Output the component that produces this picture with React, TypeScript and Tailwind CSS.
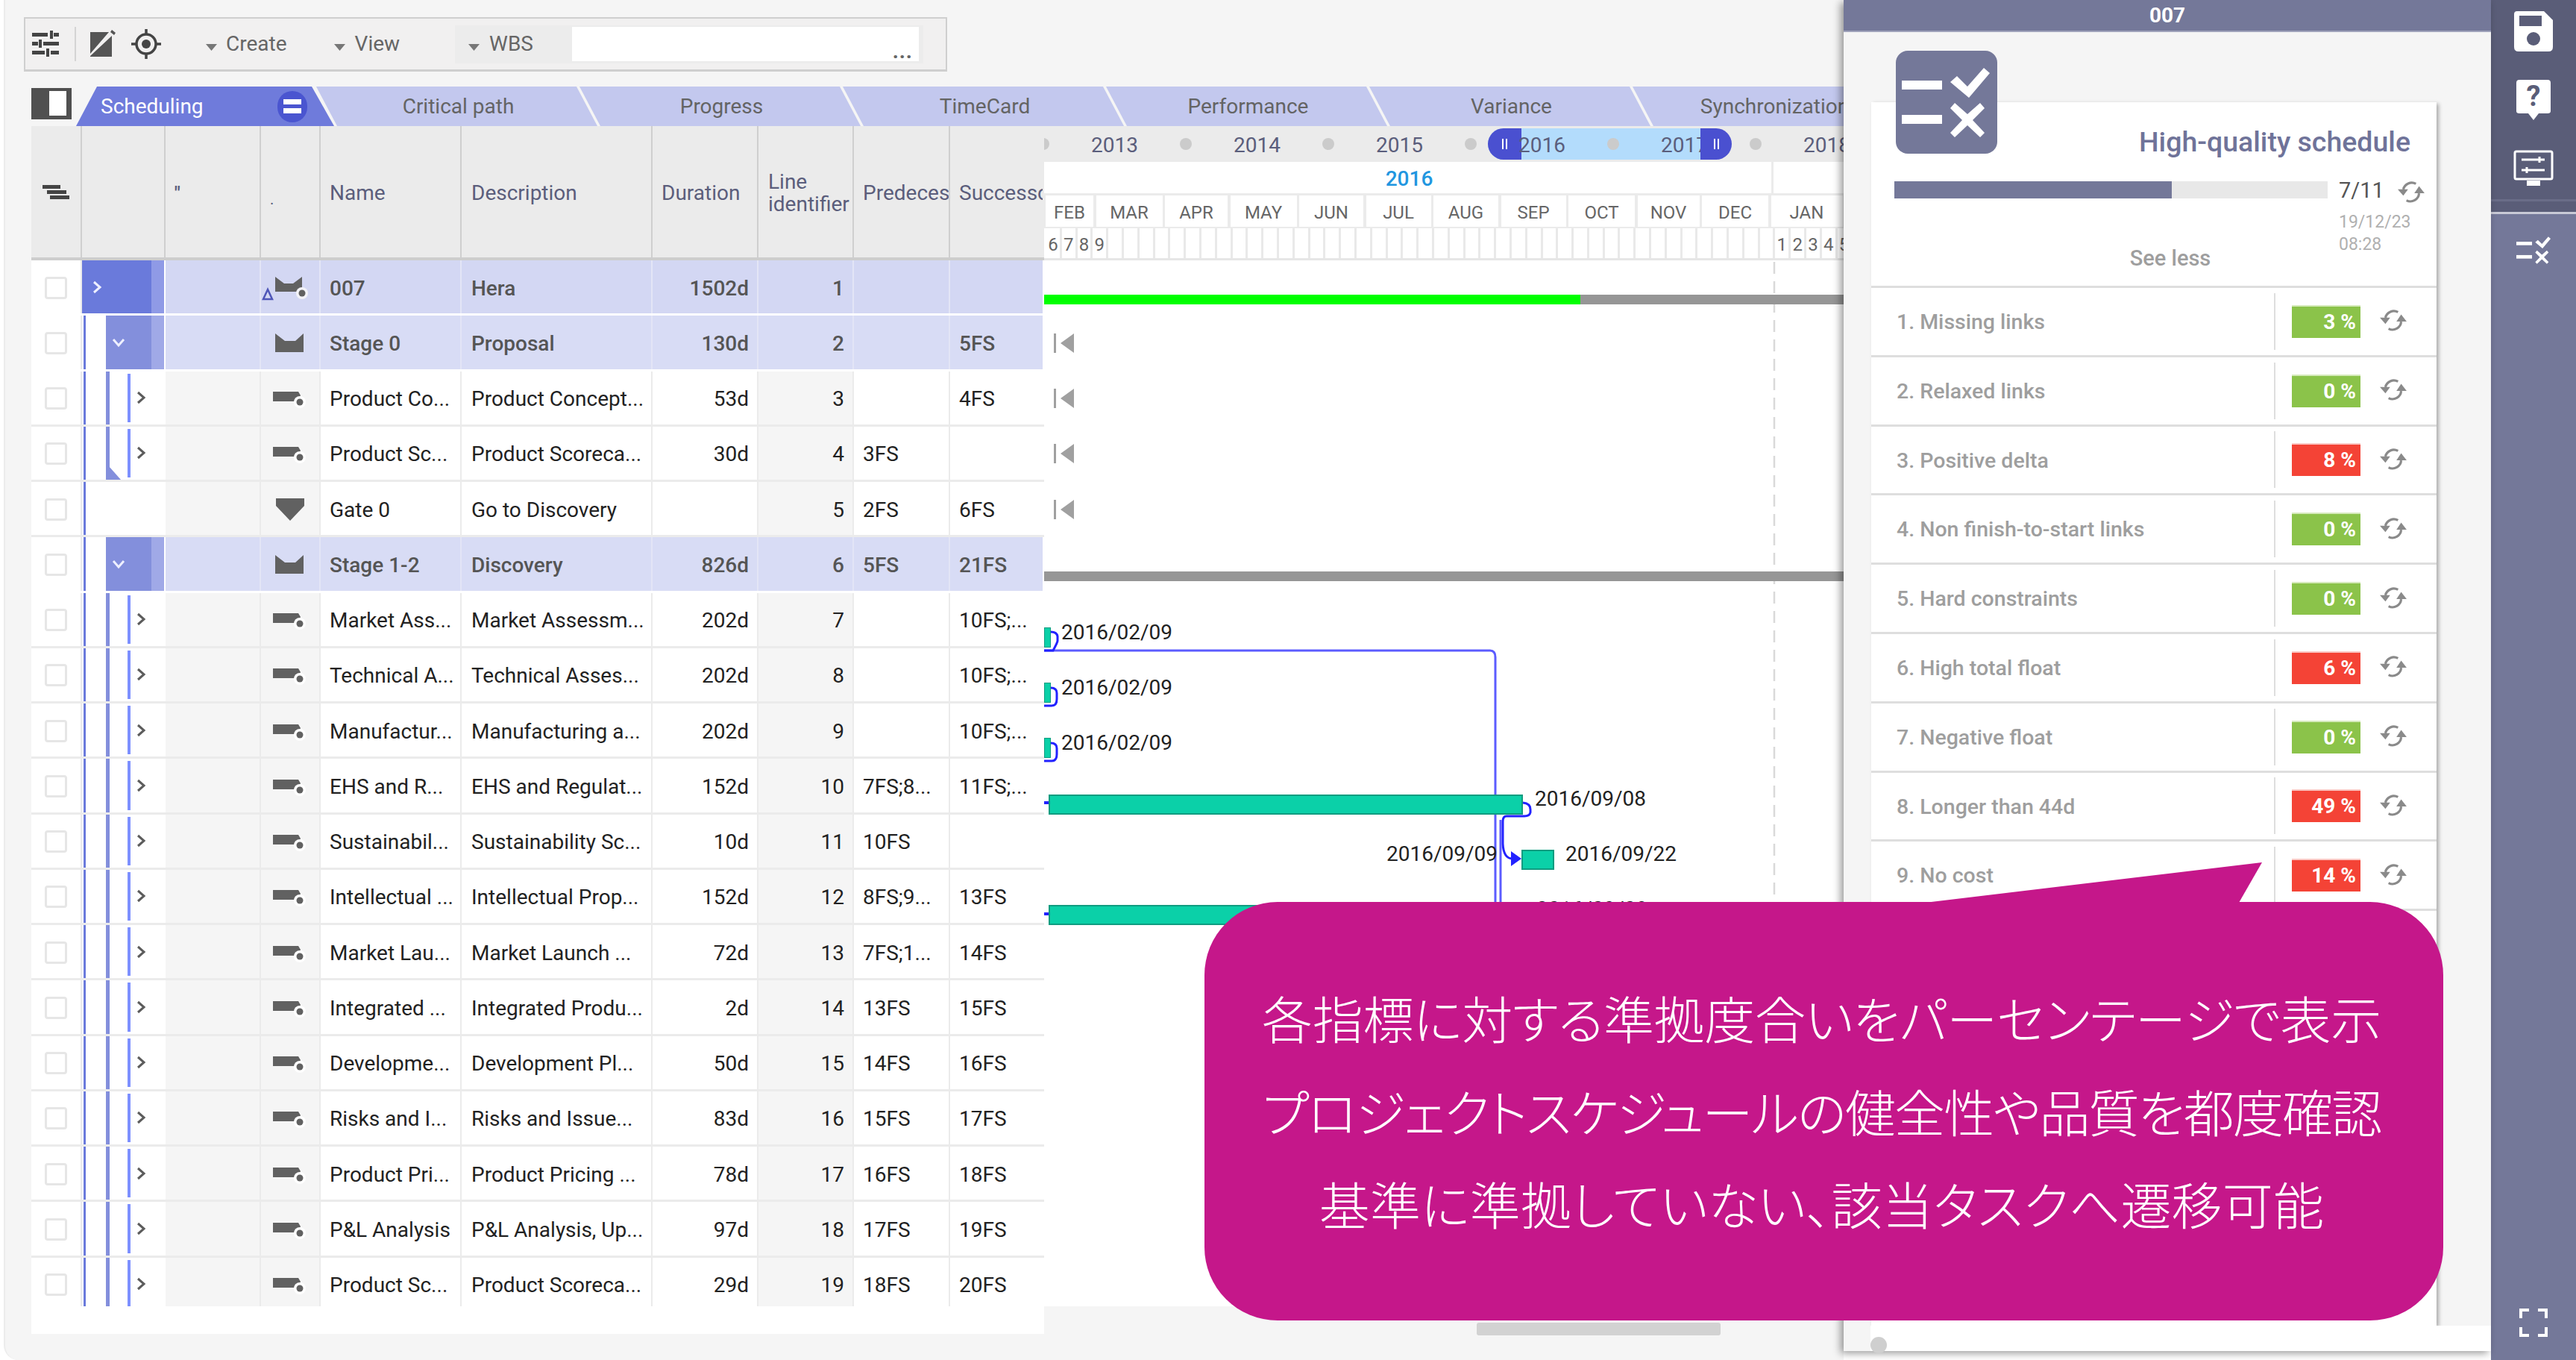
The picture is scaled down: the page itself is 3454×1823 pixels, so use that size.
import React from "react";

type Row = {
  name: string;
  desc: string;
  dur: string;
  id: string;
  pred: string;
  succ: string;
  kind: "root" | "stage" | "task" | "gate";
  end?: boolean;
};

const rows: Row[] = [
  { name: "007", desc: "Hera", dur: "1502d", id: "1", pred: "", succ: "", kind: "root" },
  { name: "Stage 0", desc: "Proposal", dur: "130d", id: "2", pred: "", succ: "5FS", kind: "stage" },
  { name: "Product Co...", desc: "Product Concept...", dur: "53d", id: "3", pred: "", succ: "4FS", kind: "task" },
  { name: "Product Sc...", desc: "Product Scoreca...", dur: "30d", id: "4", pred: "3FS", succ: "", kind: "task", end: true },
  { name: "Gate 0", desc: "Go to Discovery", dur: "", id: "5", pred: "2FS", succ: "6FS", kind: "gate" },
  { name: "Stage 1-2", desc: "Discovery", dur: "826d", id: "6", pred: "5FS", succ: "21FS", kind: "stage" },
  { name: "Market Ass...", desc: "Market Assessm...", dur: "202d", id: "7", pred: "", succ: "10FS;...", kind: "task" },
  { name: "Technical A...", desc: "Technical Asses...", dur: "202d", id: "8", pred: "", succ: "10FS;...", kind: "task" },
  { name: "Manufactur...", desc: "Manufacturing a...", dur: "202d", id: "9", pred: "", succ: "10FS;...", kind: "task" },
  { name: "EHS and R...", desc: "EHS and Regulat...", dur: "152d", id: "10", pred: "7FS;8...", succ: "11FS;...", kind: "task" },
  { name: "Sustainabil...", desc: "Sustainability Sc...", dur: "10d", id: "11", pred: "10FS", succ: "", kind: "task" },
  { name: "Intellectual ...", desc: "Intellectual Prop...", dur: "152d", id: "12", pred: "8FS;9...", succ: "13FS", kind: "task" },
  { name: "Market Lau...", desc: "Market Launch ...", dur: "72d", id: "13", pred: "7FS;1...", succ: "14FS", kind: "task" },
  { name: "Integrated ...", desc: "Integrated Produ...", dur: "2d", id: "14", pred: "13FS", succ: "15FS", kind: "task" },
  { name: "Developme...", desc: "Development Pl...", dur: "50d", id: "15", pred: "14FS", succ: "16FS", kind: "task" },
  { name: "Risks and I...", desc: "Risks and Issue...", dur: "83d", id: "16", pred: "15FS", succ: "17FS", kind: "task" },
  { name: "Product Pri...", desc: "Product Pricing ...", dur: "78d", id: "17", pred: "16FS", succ: "18FS", kind: "task" },
  { name: "P&L Analysis", desc: "P&L Analysis, Up...", dur: "97d", id: "18", pred: "17FS", succ: "19FS", kind: "task" },
  { name: "Product Sc...", desc: "Product Scoreca...", dur: "29d", id: "19", pred: "18FS", succ: "20FS", kind: "task" },
];

const checks: { label: string; v: number; bad?: boolean }[] = [
  { label: "1. Missing links", v: 3 },
  { label: "2. Relaxed links", v: 0 },
  { label: "3. Positive delta", v: 8, bad: true },
  { label: "4. Non finish-to-start links", v: 0 },
  { label: "5. Hard constraints", v: 0 },
  { label: "6. High total float", v: 6, bad: true },
  { label: "7. Negative float", v: 0 },
  { label: "8. Longer than 44d", v: 49, bad: true },
  { label: "9. No cost", v: 14, bad: true },
];

const months: [string, number][] = [
  ["FEB", 64], ["MAR", 89], ["APR", 84], ["MAY", 89], ["JUN", 86], ["JUL", 87], ["AUG", 87], ["SEP", 87], ["OCT", 89], ["NOV", 83], ["DEC", 89], ["JAN", 96],
];

const days: string[] = Array.from({ length: 53 }, (_, i) => {
  if (i < 4) return String(i + 6);
  if (i >= 47) return String(i - 46);
  return "";
});

function Refresh() {
  return (
    <svg viewBox="0 0 36 32" className="w-[38px] h-[34px]">
      <path d="M8 13 A11 11 0 0 1 24 6" fill="none" stroke="#8a8a8a" strokeWidth="3" />
      <path d="M1 13 H14 L8 21 Z" fill="#8a8a8a" />
      <path d="M28 18 A11 11 0 0 1 12 27" fill="none" stroke="#8a8a8a" strokeWidth="3" />
      <path d="M22 18 H35 L28 9 Z" fill="#8a8a8a" />
    </svg>
  );
}

function GlyphShapes() {
  return (
    <g fill="#fff">
      <rect x="8" y="40" width="54" height="12" />
      <rect x="8" y="86" width="54" height="12" />
      <path d="M73 42 L82 34 L96 48 L118 23 L126 30 L98 63 Z" />
      <path d="M79 70 L96 85 L113 70 L119 77 L103 93 L119 110 L113 116 L96 100 L79 116 L73 110 L89 93 L73 77 Z" />
    </g>
  );
}

function TypeIcon({ kind }: { kind: Row["kind"] }) {
  if (kind === "gate")
    return (
      <svg viewBox="0 0 40 32" className="w-[40px] h-[32px]">
        <path d="M1 1 H39 V11 L20 31 L1 11 Z" fill="#616161" />
      </svg>
    );
  if (kind === "task")
    return (
      <svg viewBox="0 0 48 26" className="w-[48px] h-[26px]">
        <path d="M1 4 H35 L38 9 L34 17 H1 Z" fill="#616161" />
        <circle cx="37" cy="18" r="8" fill="#fff" />
        <circle cx="37" cy="18" r="4.5" fill="#616161" />
      </svg>
    );
  if (kind === "stage")
    return (
      <svg viewBox="0 0 48 28" className="w-[48px] h-[28px]">
        <path d="M4 1 L17 11 H31 L42 1 V26 H4 Z" fill="#616161" />
      </svg>
    );
  return (
    <svg viewBox="0 0 62 34" className="w-[62px] h-[34px] -ml-[14px]">
      <path d="M18 2 L30 11 H42 L54 2 V22 H18 Z" fill="#616161" />
      <circle cx="54" cy="24" r="8" fill="#f3f3f8" />
      <circle cx="54" cy="24" r="4.5" fill="#616161" />
      <path d="M8 19 L14 32 H2 Z" fill="none" stroke="#4f56b8" strokeWidth="2.5" />
    </svg>
  );
}

function Chevron({ down, white }: { down?: boolean; white?: boolean }) {
  return (
    <svg viewBox="0 0 20 20" className="w-[20px] h-[20px]">
      <path
        d={down ? "M3 6 L10 14 L17 6" : "M6 3 L14 10 L6 17"}
        fill="none"
        stroke={white ? "#eef0ff" : "#5c5c5c"}
        strokeWidth="3"
      />
    </svg>
  );
}

function TreeCell({ row }: { row: Row }) {
  if (row.kind === "root")
    return (
      <div className="w-[112px] shrink-0 flex h-full">
        <div className="w-[93px] bg-[#6a7adb] flex items-center pl-[10px]">
          <Chevron white />
        </div>
        <div className="w-[17px] bg-[#8f9ae6]" />
      </div>
    );
  if (row.kind === "stage")
    return (
      <div className="w-[112px] shrink-0 flex h-full">
        <div className="w-[3px] bg-[#6a7adb] ml-[2px]" />
        <div className="w-[27px]" />
        <div className="w-[61px] bg-[#838fdc] flex items-center pl-[7px]">
          <Chevron down white />
        </div>
        <div className="w-[17px] bg-[#a0a9e7]" />
      </div>
    );
  if (row.kind === "gate")
    return (
      <div className="w-[112px] shrink-0 flex h-full">
        <div className="w-[3px] bg-[#6a7adb] ml-[2px]" />
      </div>
    );
  return (
    <div className="w-[112px] shrink-0 flex h-full items-stretch">
      <div className="w-[3px] bg-[#6a7adb] ml-[2px]" />
      <div className="w-[27px]" />
      <div className="relative w-[5px] bg-[#838fdc]">
        {row.end && (
          <svg viewBox="0 0 20 18" className="absolute left-0 bottom-0 w-[20px] h-[18px]">
            <path d="M0 18 L4 0 L20 18 Z" fill="#838fdc" />
          </svg>
        )}
      </div>
      <div className="w-[24px]" />
      <div className="w-[4px] bg-[#7d90ff] my-[3px]" />
      <div className="flex items-center ml-[4px]">
        <Chevron />
      </div>
    </div>
  );
}

function TableRow({ row }: { row: Row }) {
  const hi = row.kind === "root" || row.kind === "stage";
  const rootRow = row.kind === "root";
  const txt = hi ? "text-[#555] font-medium pt-[4px]" : "text-[#222] pt-[4px]";
  const hiBg = rootRow ? "bg-[#d3d7f3]" : "bg-[#d8dcf5]";
  const sep = hi ? "border-r-2 border-[#e3e5f6]" : "border-r-2 border-[#ebebeb]";
  const soft = hi ? hiBg : "bg-[#f5f5f5]";
  const plain = hi ? hiBg : "bg-white";
  return (
    <div className={`flex h-[74.25px] shrink-0 border-b-[3px] ${hi ? "border-white" : "border-[#ebebeb]"}`}>
      <div className="w-[68px] shrink-0 flex items-center justify-center border-r-2 border-[#ebebeb] bg-white pt-[2px]">
        <div className="w-[30px] h-[30px] rounded-[4px] border-[3px] border-[#e6e6e6]" />
      </div>
      <TreeCell row={row} />
      <div className={`w-[128px] shrink-0 ${soft} ${sep}`} />
      <div className={`w-[80px] shrink-0 ${soft} ${sep} flex items-center justify-center pt-[2px]`}>
        <TypeIcon kind={row.kind} />
      </div>
      <div className={`w-[189px] shrink-0 ${plain} ${sep} ${txt} flex items-center pl-[12px] whitespace-nowrap overflow-hidden`}>{row.name}</div>
      <div className={`w-[256px] shrink-0 ${plain} ${sep} ${txt} flex items-center pl-[13px] whitespace-nowrap overflow-hidden`}>{row.desc}</div>
      <div className={`w-[142px] shrink-0 ${plain} ${sep} ${txt} flex items-center justify-end pr-[11px]`}>{row.dur}</div>
      <div className={`w-[128px] shrink-0 ${soft} ${sep} ${txt} flex items-center justify-end pr-[11px]`}>{row.id}</div>
      <div className={`w-[129px] shrink-0 ${plain} ${sep} ${txt} flex items-center pl-[12px] whitespace-nowrap overflow-hidden`}>{row.pred}</div>
      <div className={`w-[124px] shrink-0 ${plain} ${txt} flex items-center pl-[12px] whitespace-nowrap overflow-hidden`}>{row.succ}</div>
    </div>
  );
}

function Header() {
  const cell = "shrink-0 border-r-2 border-[#cfcfcf] flex items-center pl-[12px] pt-[4px] whitespace-nowrap overflow-hidden";
  return (
    <div className="flex h-[180px] shrink-0 bg-[#ebebeb] border-b-4 border-[#cdcdcd] text-[#5b5e7c] text-[28px]">
      <div className="w-[68px] shrink-0 border-r-2 border-[#cfcfcf] flex items-center justify-center pt-[2px]">
        <svg viewBox="0 0 36 20" className="w-[36px] h-[20px]">
          <rect x="0" y="0" width="24" height="5" fill="#444" />
          <rect x="6" y="7" width="26" height="5" fill="#444" />
          <rect x="10" y="14" width="26" height="5" fill="#444" />
        </svg>
      </div>
      <div className="w-[112px] shrink-0 border-r-2 border-[#cfcfcf]" />
      <div className={`w-[128px] ${cell} text-[24px] font-bold`}>"</div>
      <div className={`w-[80px] ${cell} text-[20px] pt-[20px]`}>.</div>
      <div className={`w-[189px] ${cell}`}>Name</div>
      <div className={`w-[256px] ${cell} pl-[13px]`}>Description</div>
      <div className={`w-[142px] ${cell}`}>Duration</div>
      <div className={`w-[128px] ${cell} leading-[30px] pl-[13px]`}>
        <span>
          Line
          <br />
          identifier
        </span>
      </div>
      <div className={`w-[129px] ${cell}`}>Predeces</div>
      <div className="w-[124px] shrink-0 flex items-center pl-[12px] pt-[4px] whitespace-nowrap overflow-hidden">Successors</div>
    </div>
  );
}

function Tabs() {
  const names = ["Critical path", "Progress", "TimeCard", "Performance", "Variance", "Synchronization"];
  return (
    <div className="flex h-[53px] shrink-0 text-[28px] pl-[42px]">
      <div className="w-[54px] h-[42px] mt-[2px] shrink-0 border-solid border-l-[24px] border-t-[4px] border-b-[5px] border-r-[7px] border-[#505050] bg-white" />
      <div className="w-[346px] ml-[6px] shrink-0 h-full bg-[#6f7bdb] [clip-path:polygon(28px_0,316px_0,100%_100%,0_100%)] flex items-center justify-between pl-[33px] pr-[36px] text-white">
        <span>Scheduling</span>
        <span className="w-[40px] h-[42px] rounded-full bg-[#4a55d0] flex flex-col items-center justify-center gap-[5px]">
          <span className="w-[24px] h-[7px] bg-white" />
          <span className="w-[24px] h-[7px] bg-white" />
        </span>
      </div>
      {names.map((n) => (
        <div
          key={n}
          className="w-[377px] -ml-[24px] shrink-0 h-full bg-[#c3c8ee] [clip-path:polygon(0_0,349px_0,100%_100%,28px_100%)] flex items-center justify-center pl-[4px] text-[#646464] whitespace-nowrap"
        >
          {n}
        </div>
      ))}
    </div>
  );
}

function Caret() {
  return (
    <svg viewBox="0 0 15 9" className="w-[15px] h-[9px] mt-[8px] shrink-0">
      <path d="M0 0 H15 L7.5 9 Z" fill="#777" />
    </svg>
  );
}

function Toolbar() {
  return (
    <div className="ml-[32px] w-[1238px] h-[73px] shrink-0 bg-[#f1f0f0] border-2 border-[#cfcfcf] border-b-[3px] flex items-center text-[28px] text-[#666]">
      <svg viewBox="0 0 36 36" className="w-[36px] h-[36px] ml-[9px]">
        <g fill="#444">
          <rect x="0" y="3" width="21" height="5" />
          <rect x="24" y="0" width="4" height="11" />
          <rect x="29" y="3" width="7" height="5" />
          <rect x="0" y="15" width="8" height="5" />
          <rect x="9" y="12" width="4" height="11" />
          <rect x="15" y="15" width="21" height="5" />
          <rect x="0" y="27" width="17" height="5" />
          <rect x="19" y="24" width="4" height="11" />
          <rect x="25" y="27" width="11" height="5" />
        </g>
      </svg>
      <div className="w-[2px] h-[46px] bg-[#d4d4d4] ml-[21px]" />
      <svg viewBox="0 0 36 38" className="w-[36px] h-[38px] ml-[18px]">
        <path d="M1 3 H26 L1 32 Z M30 8 V36 H1 V35 Z" fill="#555" />
        <path d="M30 0 L35 4 L33 7 L28 3 Z" fill="#555" />
      </svg>
      <svg viewBox="0 0 40 40" className="w-[40px] h-[40px] ml-[20px]">
        <circle cx="20" cy="20" r="13" fill="none" stroke="#444" strokeWidth="3.5" />
        <circle cx="20" cy="20" r="6" fill="#444" />
        <path d="M20 0 V6 M20 34 V40 M0 20 H6 M34 20 H40" stroke="#444" strokeWidth="3.5" />
      </svg>
      <span className="ml-[60px] flex">
        <Caret />
      </span>
      <span className="ml-[12px]">Create</span>
      <span className="ml-[63px] flex">
        <Caret />
      </span>
      <span className="ml-[13px]">View</span>
      <div className="ml-[74px] w-[628px] h-[51px] bg-[#ececec] flex items-center">
        <span className="ml-[18px] flex">
          <Caret />
        </span>
        <span className="ml-[13px]">WBS</span>
        <div className="ml-[52px] w-[465px] h-[46px] bg-white flex items-end justify-end pr-[8px] leading-[26px] font-bold tracking-[1px]">...</div>
      </div>
    </div>
  );
}

function Ruler() {
  const years = ["2013", "2014", "2015", "2016", "2017", "2018"];
  return (
    <div className="relative h-[48px] shrink-0 bg-[#ebebeb] overflow-hidden text-[28px] text-[#5b5e7c]">
      <div className="absolute left-[595px] top-[3px] w-[285px] h-[42px] bg-[#b3dcfc] rounded-l-[21px]">
        <div className="w-[45px] h-full bg-[#4a50d0] rounded-l-[21px] flex items-center justify-center gap-[3px] text-white">
          <span className="w-[2px] h-[14px] bg-white" />
          <span className="w-[2px] h-[14px] bg-white" />
        </div>
      </div>
      <div className="relative flex items-center h-full -ml-[9px]">
        {years.map((y) => (
          <div key={y} className="w-[191px] shrink-0 flex items-center">
            <span className="w-[16px] h-[16px] rounded-full bg-[#cbcbcb] shrink-0" />
            <span className="w-[175px] text-center pt-[3px]">{y}</span>
          </div>
        ))}
      </div>
      <div className="absolute left-[880px] top-[3px] w-[42px] h-[42px] bg-[#4a50d0] rounded-r-[21px] flex items-center justify-center gap-[3px]">
        <span className="w-[2px] h-[14px] bg-white" />
        <span className="w-[2px] h-[14px] bg-white" />
      </div>
    </div>
  );
}

function GanttLabel({ className, children }: { className: string; children: string }) {
  return <span className={`absolute text-[28px] leading-[34px] text-[#222] ${className}`}>{children}</span>;
}

function GanttBar({ className }: { className: string }) {
  return <div className={`absolute bg-[#0bd0a8] border-2 border-[#0f9c80] ${className}`} />;
}

function GanttMarker({ className }: { className: string }) {
  return (
    <svg viewBox="0 0 28 26" className={`absolute w-[28px] h-[26px] ${className}`}>
      <rect x="0" y="0" width="3" height="26" fill="#a0a0a0" />
      <path d="M27 0 V26 L9 13 Z" fill="#a0a0a0" />
    </svg>
  );
}

function Gantt() {
  return (
    <div className="w-[1074px] shrink-0 flex flex-col">
      <Ruler />
      <div className="h-[45px] shrink-0 bg-white border-b-[3px] border-[#ebebeb] flex">
        <div className="w-[978px] flex items-center justify-center pt-[4px] pl-[4px] text-[28px] font-medium text-[#2196e0] border-r-[3px] border-[#ebebeb]">2016</div>
      </div>
      <div className="h-[44px] shrink-0 bg-[#ebebeb] flex gap-[3.5px] pl-[2px] pb-[2px] text-[24px] text-[#666]">
        {months.map(([m, w]) => (
          <div key={m} style={{ width: w }} className="shrink-0 bg-white flex items-center justify-center pt-[3px]">
            {m}
          </div>
        ))}
      </div>
      <div className="h-[43px] shrink-0 bg-white border-b-[3px] border-[#e6e6e6] flex pl-[3px] text-[24px] text-[#666] overflow-hidden">
        {days.map((d, i) => (
          <div key={i} className="w-[20.8px] shrink-0 border-r-[3px] border-[#e9e9e9] flex items-center justify-center pt-[3px]">
            {d}
          </div>
        ))}
      </div>
      <div className="relative h-[1402px] shrink-0 bg-white overflow-hidden">
        <svg viewBox="1398 349 1074 1402" className="absolute -left-[2px] top-[1px] w-[1074px] h-[1402px]">
          <path d="M2379 350 V1751" stroke="#d9d9d9" strokeWidth="2.5" strokeDasharray="16 10" fill="none" />
          <path d="M1400 871 H1998 Q2005 871 2005 880 V1215" stroke="#5c5cff" strokeWidth="3" fill="none" />
          <path d="M1400 871 H1412 Q1418 860 1418 858 V852 Q1417 846 1409 846" stroke="#2222ff" strokeWidth="3" fill="none" />
          <path d="M1400 945 H1410 Q1417 945 1417 936 V928 Q1417 921 1409 921" stroke="#2222ff" strokeWidth="3" fill="none" />
          <path d="M1400 1019 H1410 Q1417 1019 1417 1010 V1002 Q1417 995 1409 995" stroke="#2222ff" strokeWidth="3" fill="none" />
          <path d="M1400 1075 H1407 M1400 1224 H1407" stroke="#2222ff" strokeWidth="4" fill="none" />
          <path d="M2042 1075 Q2052 1076 2052 1084 V1088 Q2051 1093 2044 1093 H2020 Q2015 1093 2015 1100 V1130 Q2016 1150 2028 1150" stroke="#2222ff" strokeWidth="3" fill="none" />
          <path d="M2012 1098 V1215" stroke="#5c5cff" strokeWidth="3" fill="none" />
          <path d="M2026 1140 L2040 1150 L2026 1160 Z" fill="#2222ff" />
        </svg>
        <div className="absolute left-0 top-[46px] w-[719px] h-[13px] bg-[#00ff00]" />
        <div className="absolute left-[719px] top-[46px] w-[355px] h-[13px] bg-[#969696]" />
        <div className="absolute left-0 top-[417px] w-[1074px] h-[13px] bg-[#969696]" />
        <GanttMarker className="left-[13px] top-[98px]" />
        <GanttMarker className="left-[13px] top-[172px]" />
        <GanttMarker className="left-[13px] top-[246px]" />
        <GanttMarker className="left-[13px] top-[321px]" />
        <GanttBar className="left-0 top-[492px] w-[9px] h-[27px] !border" />
        <GanttBar className="left-0 top-[566px] w-[9px] h-[27px] !border" />
        <GanttBar className="left-0 top-[640px] w-[9px] h-[27px] !border" />
        <GanttLabel className="left-[23px] top-[482px]">2016/02/09</GanttLabel>
        <GanttLabel className="left-[23px] top-[556px]">2016/02/09</GanttLabel>
        <GanttLabel className="left-[23px] top-[630px]">2016/02/09</GanttLabel>
        <GanttBar className="left-[6px] top-[716px] w-[636px] h-[27px]" />
        <GanttLabel className="left-[658px] top-[705px]">2016/09/08</GanttLabel>
        <GanttLabel className="left-[459px] top-[779px]">2016/09/09</GanttLabel>
        <GanttBar className="left-[640px] top-[790px] w-[44px] h-[27px]" />
        <GanttLabel className="left-[699px] top-[779px]">2016/09/22</GanttLabel>
        <GanttBar className="left-[6px] top-[864px] w-[300px] h-[27px]" />
        <GanttLabel className="left-[660px] top-[853px]">2016/09/08</GanttLabel>
      </div>
      <div className="flex justify-start pl-[580px] pt-[22px]">
        <div className="w-[327px] h-[17px] rounded-[3px] bg-[#d2d2d2]" />
      </div>
    </div>
  );
}

function Panel() {
  return (
    <div className="relative z-10 w-[868px] h-[1811px] shrink-0 bg-[#f5f5f5] shadow-[-4px_3px_10px_rgba(0,0,0,0.4)] flex flex-col">
      <div className="h-[43px] shrink-0 bg-[#747899] text-white font-bold text-[28px] flex items-center justify-center border-b-2 border-[#9fa2ba]">007</div>
      <svg viewBox="0 0 136 138" className="absolute left-[70px] top-[68px] w-[136px] h-[138px]">
        <rect x="0" y="0" width="136" height="138" rx="16" fill="#747899" />
        <GlyphShapes />
      </svg>
      <div className="ml-[37px] mt-[94px] w-[758px] h-[1640px] shrink-0 bg-white shadow-[3px_2px_5px_rgba(0,0,0,0.3)] flex flex-col">
        <div className="h-[249px] shrink-0 border-b-[3px] border-[#dedede] flex flex-col">
          <div className="text-[37.5px] leading-[44px] font-medium text-[#6f7399] text-right pr-[35px] mt-[31px]">High-quality schedule</div>
          <div className="flex items-start mt-[30px] pl-[31px]">
            <div className="w-[581px] h-[23px] bg-[#e8e8e8] mt-[1px]">
              <div className="w-[372px] h-full bg-[#747899]" />
            </div>
            <div className="ml-[15px] text-[29px] leading-[26px] text-[#555]">7/11</div>
            <div className="ml-[17px] -mt-[2px]">
              <Refresh />
            </div>
          </div>
          <div className="mt-[9px] pl-[627px] text-[23px] leading-[30px] text-[#b0b0b0]">
            19/12/23
            <br />
            08:28
          </div>
          <div className="-mt-[19px] pl-[44px] text-center text-[29px] font-medium text-[#9e9e9e] leading-[44px]">See less</div>
        </div>
        {checks.map((c) => (
          <div key={c.label} className="h-[92.8px] shrink-0 border-b-[3px] border-[#dedede] flex items-center text-[28px]">
            <div className="w-[540px] pl-[34px] pt-[3px] font-medium text-[28.5px] text-[#9e9e9e]">{c.label}</div>
            <div className="w-[2px] h-[76px] bg-[#dedede]" />
            <div
              className={`ml-[22px] w-[92px] h-[44px] ${c.bad ? "bg-[#f44336]" : "bg-[#8bc34a]"} border-t-2 ${c.bad ? "border-[#fbc8c4]" : "border-[#d6eabc]"} text-white font-bold flex items-center justify-end pr-[6px]`}
            >
              {c.v} %
            </div>
            <div className="ml-[25px] -mt-[3px]">
              <Refresh />
            </div>
          </div>
        ))}
      </div>
      <div className="flex-1 ml-[36px] bg-white flex items-end">
        <div className="w-[22px] h-[22px] rounded-full bg-[#cfcfcf] -mb-[3px]" />
      </div>
    </div>
  );
}

function Sidebar() {
  return (
    <div className="w-[114px] h-full shrink-0 bg-[#747899] flex flex-col">
      <div className="h-[270px] shrink-0 bg-[#5a5d78] border-b-[3px] border-[#6a6d88] flex flex-col items-center">
        <svg viewBox="0 0 52 54" className="w-[52px] h-[54px] mt-[15px]">
          <path d="M4 0 H40 L52 12 V48 Q52 54 46 54 H6 Q0 54 0 48 V4 Q0 0 4 0 Z" fill="#fff" />
          <rect x="7" y="6" width="30" height="14" fill="#5a5d78" />
          <circle cx="26" cy="37" r="9" fill="#5a5d78" />
        </svg>
        <svg viewBox="0 0 46 54" className="w-[46px] h-[54px] mt-[38px]">
          <path d="M4 0 H42 Q46 0 46 4 V42 Q46 45 42 45 H30 L23 54 L16 45 H4 Q0 45 0 42 V4 Q0 0 4 0 Z" fill="#fff" />
          <text x="23" y="35" textAnchor="middle" fontSize="38" fontWeight="700" fill="#5a5d78" fontFamily="Roboto, sans-serif">?</text>
        </svg>
        <svg viewBox="0 0 54 48" className="w-[54px] h-[48px] mt-[40px]">
          <rect x="2" y="2" width="50" height="37" rx="2" fill="none" stroke="#fff" strokeWidth="3" />
          <rect x="18" y="41" width="18" height="7" fill="#fff" />
          <path d="M11 13 H42 M35 9 V17 M11 27 H42 M18 23 V31" stroke="#fff" strokeWidth="3" />
        </svg>
      </div>
      <div className="h-[17px] shrink-0 bg-[#5a5d78] border-b-[3px] border-[#c9cad6]" />
      <div className="flex justify-center mt-[30px]">
        <svg viewBox="8 23 118 93" className="w-[46px] h-[37px]">
          <GlyphShapes />
        </svg>
      </div>
      <div className="mt-auto mb-[31px] flex justify-center">
        <svg viewBox="0 0 38 38" className="w-[38px] h-[38px]">
          <path d="M2 13 V2 H13 M25 2 H36 V13 M2 25 V36 H13 M25 36 H36 V25" fill="none" stroke="#fff" strokeWidth="4" />
        </svg>
      </div>
    </div>
  );
}

function Callout() {
  return (
    <div className="absolute z-20 left-[1615px] top-[1209px] w-[1661px] h-[561px] rounded-[98px] bg-[#c5178a] flex flex-col items-center pt-[93px] pr-[6px] text-white text-[68px] leading-[124.5px] font-light whitespace-nowrap font-['Noto_Sans_CJK_JP',sans-serif] [font-feature-settings:'palt']">
      <svg viewBox="0 0 452 54" className="absolute left-[966px] -top-[53px] w-[452px] h-[54px]">
        <path d="M0 54 L452 0 L421 54 Z" fill="#c5178a" />
      </svg>
      <div className="tracking-[-0.3px]">各指標に対する準拠度合いをパーセンテージで表示</div>
      <div className="tracking-[-1.8px]">プロジェクトスケジュールの健全性や品質を都度確認</div>
      <div className="tracking-[0.2px]">基準に準拠していない、該当タスクへ遷移可能</div>
    </div>
  );
}

export default function App() {
  return (
    <div className="relative w-[3454px] h-[1823px] overflow-hidden bg-white flex font-[Roboto,sans-serif]">
      <div className="ml-[5px] w-[2467px] h-full shrink-0 bg-[#f5f5f5] border-l-2 border-[#ececec] rounded-bl-[20px] flex flex-col overflow-hidden">
        <div className="-ml-[7px] flex flex-col h-full w-[2472px]">
          <div className="h-[23px] shrink-0" />
          <Toolbar />
          <div className="h-[20px] shrink-0" />
          <Tabs />
          <div className="flex pl-[42px] text-[28px]">
            <div className="w-[1358px] shrink-0 flex flex-col">
              <Header />
              <div className="h-[1402px] overflow-hidden flex flex-col bg-white shrink-0">
                {rows.map((r) => (
                  <TableRow key={r.id} row={r} />
                ))}
              </div>
              <div className="h-[37px] bg-white shrink-0" />
            </div>
            <Gantt />
          </div>
        </div>
      </div>
      <Panel />
      <Sidebar />
      <Callout />
    </div>
  );
}
